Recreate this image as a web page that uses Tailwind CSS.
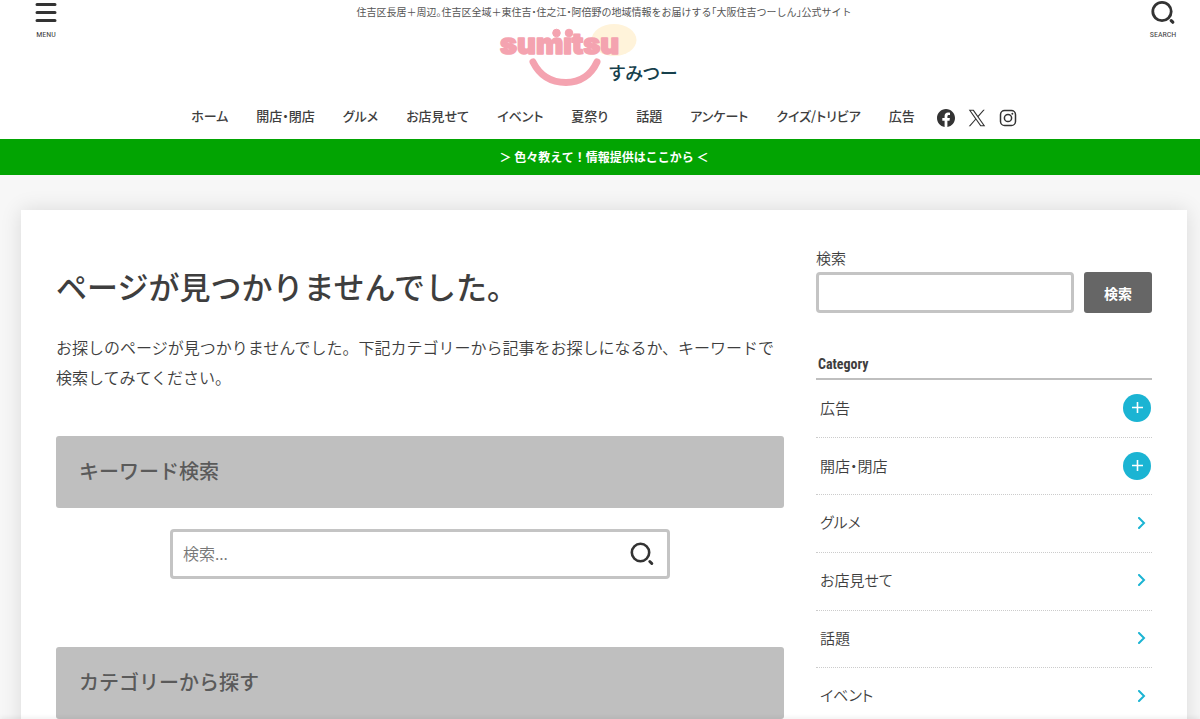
<!DOCTYPE html>
<html lang="ja">
<head>
  <meta charset="utf-8">
  <meta name="viewport" content="width=device-width,initial-scale=1">
  <title>ページが見つかりませんでした。</title>
  <script src="https://cdn.jsdelivr.net/npm/@tailwindcss/browser@4"></script>
</head>
<body class="bg-[#f7f7f7] text-[#3e3e3e] font-['Noto_Sans_CJK_JP',sans-serif] [font-feature-settings:'palt'] overflow-x-hidden">

  <!-- Header -->
  <header class="relative bg-white pl-2">
    <p class="text-center text-[10px] leading-6 text-[#555] [font-feature-settings:'halt']">住吉区長居＋周辺。住吉区全域＋東住吉・住之江・阿倍野の地域情報をお届けする「大阪住吉つーしん」公式サイト</p>

    <button type="button" class="absolute left-[34px] top-[2px] flex w-6 flex-col items-center gap-[5px]">
      <svg width="22" height="22" viewBox="0 0 22 22" fill="none" stroke="#333" stroke-width="3" stroke-linecap="round"><path d="M2 2.500h18M2 10.500h18M2 18.500h18"/></svg>
      <span class="font-['Roboto_Condensed','Noto_Sans',sans-serif] text-[8px] leading-3">MENU</span>
    </button>
    <button type="button" class="absolute right-[22px] top-0 flex w-[30px] flex-col items-center">
      <svg width="26" height="26" viewBox="0 0 26 26" fill="none" stroke="#333" stroke-width="2.800" stroke-linecap="round"><circle cx="12" cy="11.500" r="9.200"/><path d="M21.200 20.600l1.600 1.600" stroke-width="3.200"/></svg>
      <span class="mt-[3px] font-['Roboto_Condensed','Noto_Sans',sans-serif] text-[8px] leading-3">SEARCH</span>
    </button>

    <a href="#" class="mx-auto block w-[212px]" aria-label="sumitsu すみつー">
      <svg width="212" height="66" viewBox="498 24 212 66">
        <ellipse cx="614" cy="40" rx="22.500" ry="16" fill="#fff3da"/>
        <g fill="#f4a3b0" stroke="#f4a3b0" stroke-linejoin="round">
          <text x="500" y="54" font-family="Inter" font-weight="900" font-size="29" stroke-width="1.600">sumıtsu</text>
          <circle cx="556.500" cy="33" r="3.800"/>
          <circle cx="569" cy="33" r="3.800"/>
          <path d="M533 62c7 14 19 20.500 33 20.500s25-7.500 31-20.500" fill="none" stroke-width="7" stroke-linecap="round"/>
        </g>
        <text x="609" y="80" font-family="Noto Sans CJK JP" font-weight="500" font-size="18" fill="#16404c">すみつー</text>
      </svg>
    </a>

    <nav class="flex h-[49px] items-center justify-center gap-7 pt-[2px] text-[13px] font-medium whitespace-nowrap">
      <a href="#">ホーム</a>
      <a href="#">開店・閉店</a>
      <a href="#">グルメ</a>
      <a href="#">お店見せて</a>
      <a href="#">イベント</a>
      <a href="#">夏祭り</a>
      <a href="#">話題</a>
      <a href="#">アンケート</a>
      <a href="#">クイズ/トリビア</a>
      <a href="#">広告</a>
      <div class="-ml-[6px] flex items-center gap-[13px] pt-1">
        <a href="#" aria-label="Facebook"><svg width="18" height="18" viewBox="0 0 24 24" fill="#333"><path d="M24 12.070C24 5.400 18.630 0 12 0S0 5.400 0 12.070C0 18.100 4.390 23.100 10.130 24v-8.440H7.080v-3.490h3.050V9.410c0-3.020 1.790-4.690 4.530-4.690 1.310 0 2.680.240 2.680.240v2.970h-1.510c-1.490 0-1.960.930-1.960 1.890v2.250h3.330l-.530 3.490h-2.800V24C19.610 23.100 24 18.100 24 12.070z"/></svg></a>
        <a href="#" aria-label="X"><svg width="18" height="18" viewBox="0 0 24 24" fill="#333"><path d="M14.100 10.320L22.300 1h-1.940l-7.120 8.090L7.550 1H1l8.600 12.240L1 23h1.940l7.520-8.550L16.470 23H23l-8.900-12.680zM3.640 2.420h2.980l13.740 19.230h-2.980L3.640 2.420z"/></svg></a>
        <a href="#" aria-label="Instagram"><svg width="18" height="18" viewBox="0 0 24 24" fill="none" stroke="#333" stroke-width="2"><rect x="2" y="2" width="20" height="20" rx="5.500"/><circle cx="12" cy="12" r="4.800"/><circle cx="17.800" cy="6.200" r="1.300" fill="#333" stroke="none"/></svg></a>
      </div>
    </nav>
  </header>

  <a href="#" class="block bg-[#02a402] pl-2 text-center text-xs leading-9 font-bold text-white [font-feature-settings:normal]">＞ 色々教えて！情報提供はここから ＜</a>

  <!-- Content -->
  <div class="pt-[35px] pl-2">
    <div class="mx-[13px] flex gap-8 bg-white px-[35px] pb-20 shadow-[0_0_20px_rgba(0,0,0,0.12)]">

      <main class="min-w-0 flex-1 pt-[52px] [font-feature-settings:normal]">
        <h1 class="text-[31px] leading-[48px] font-medium">ページが見つかりませんでした。</h1>
        <p class="mt-[22px] text-base leading-[30px] font-[350]">お探しのページが見つかりませんでした。下記カテゴリーから記事をお探しになるか、キーワードで検索してみてください。</p>

        <h2 class="mt-11 rounded-[3px] bg-[#bfbfbf] px-[23px] pb-[2px] text-xl leading-[70px] font-medium text-[#5a5a5a]">キーワード検索</h2>
        <form class="mx-auto mt-[21px] flex h-[50px] max-w-[500px] items-center rounded-[4px] border-3 border-[#c4c4c4] bg-white">
          <input type="search" aria-label="検索" placeholder="検索..." class="min-w-0 flex-1 px-[10px] pb-[2px] text-base font-[350] outline-none placeholder:text-[#777]">
          <button type="submit" aria-label="検索する" class="mr-3">
            <svg width="26" height="26" viewBox="0 0 26 26" fill="none" stroke="#333" stroke-width="2.600" stroke-linecap="round"><circle cx="11.500" cy="11.500" r="8.700"/><path d="M20.800 20.500l2 2" stroke-width="3"/></svg>
          </button>
        </form>

        <h2 class="mt-[68px] rounded-[3px] bg-[#bfbfbf] px-[23px] pb-[2px] text-xl leading-[70px] font-medium text-[#5a5a5a]">カテゴリーから探す</h2>
      </main>

      <aside class="w-[336px] shrink-0 pt-[35px]">
        <form>
          <label for="side-search" class="mb-px block text-[15px] leading-[26px] font-[350]">検索</label>
          <div class="flex h-[41px] gap-[10px]">
            <input id="side-search" type="search" class="min-w-0 flex-1 rounded-[4px] border-3 border-[#c4c4c4] px-2 outline-none">
            <button type="submit" class="w-[68px] rounded-[3px] bg-[#666] text-sm font-bold text-white">検索</button>
          </div>
        </form>

        <h2 class="mt-10 border-b-2 border-[#bfbfbf] px-[2px] pb-[2px] font-['Ubuntu_Condensed','Roboto_Condensed','Liberation_Sans_Narrow','Open_Sans',sans-serif] text-[14px] leading-[23px] font-bold">Category</h2>
        <ul class="grid h-[346px] auto-rows-fr text-[15px] font-[350]">
          <li class="flex items-center justify-between border-b border-dotted border-[#ccc] pr-px pl-1">
            <a href="#">広告</a>
            <button type="button" aria-label="広告を開く" class="size-7 rounded-full bg-[#1bb4d3]"><svg width="28" height="28" viewBox="0 0 28 28" stroke="#fff" stroke-width="1.600"><path d="M9 13.500h11M14.500 8v11"/></svg></button>
          </li>
          <li class="flex items-center justify-between border-b border-dotted border-[#ccc] pr-px pl-1">
            <a href="#">開店・閉店</a>
            <button type="button" aria-label="開店・閉店を開く" class="size-7 rounded-full bg-[#1bb4d3]"><svg width="28" height="28" viewBox="0 0 28 28" stroke="#fff" stroke-width="1.600"><path d="M9 13.500h11M14.500 8v11"/></svg></button>
          </li>
          <li class="border-b border-dotted border-[#ccc]">
            <a href="#" class="flex h-full items-center justify-between pr-[6px] pb-[2px] pl-1">グルメ<svg width="9" height="12" viewBox="0 0 9 12" fill="none" stroke="#1bb4d3" stroke-width="2" stroke-linecap="round"><path d="M2 1L7 6l-5 5"/></svg></a>
          </li>
          <li class="border-b border-dotted border-[#ccc]">
            <a href="#" class="flex h-full items-center justify-between pr-[6px] pb-[2px] pl-1">お店見せて<svg width="9" height="12" viewBox="0 0 9 12" fill="none" stroke="#1bb4d3" stroke-width="2" stroke-linecap="round"><path d="M2 1L7 6l-5 5"/></svg></a>
          </li>
          <li class="border-b border-dotted border-[#ccc]">
            <a href="#" class="flex h-full items-center justify-between pr-[6px] pb-[2px] pl-1">話題<svg width="9" height="12" viewBox="0 0 9 12" fill="none" stroke="#1bb4d3" stroke-width="2" stroke-linecap="round"><path d="M2 1L7 6l-5 5"/></svg></a>
          </li>
          <li class="border-b border-dotted border-[#ccc]">
            <a href="#" class="flex h-full items-center justify-between pr-[6px] pb-[2px] pl-1">イベント<svg width="9" height="12" viewBox="0 0 9 12" fill="none" stroke="#1bb4d3" stroke-width="2" stroke-linecap="round"><path d="M2 1L7 6l-5 5"/></svg></a>
          </li>
        </ul>
      </aside>
    </div>
  </div>

  <!-- Shadow along the bottom edge -->
  <div class="fixed inset-x-0 -bottom-px h-px shadow-[0_0_5px_rgba(0,0,0,0.25)]"></div>
</body>
</html>
